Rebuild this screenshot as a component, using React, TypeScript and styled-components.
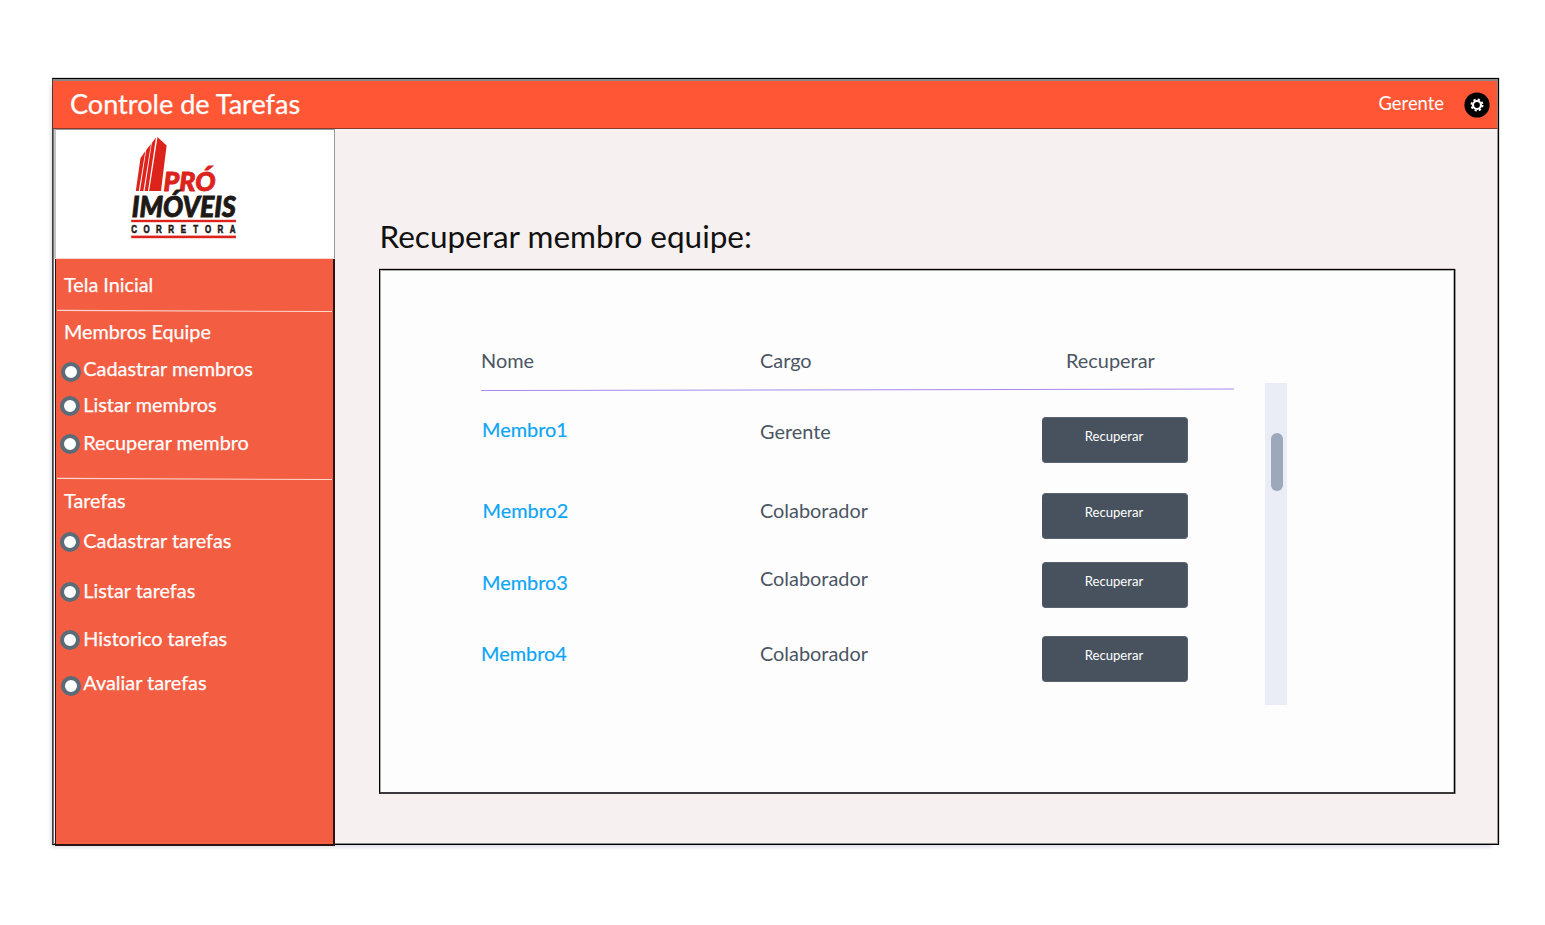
import React from "react";
import styled, { createGlobalStyle } from "styled-components";

const Global = createGlobalStyle`
  * { box-sizing: border-box; }
  body { margin: 0; background: #fff; font-family: Lato, "Liberation Sans", sans-serif; }
  h1, h2, h3, p { margin: 0; font-weight: 400; }
`;

const Page = styled.div`
  width: 1545px;
  height: 925px;
  padding: 78px 46px 80px 52px;
  overflow: hidden;
`;

const Frame = styled.div`
  width: 1447px;
  height: 767px;
  display: flex;
  flex-direction: column;
  border: 1px solid #000;
  border-left-color: #3b3f3f;
  background: #f6f0f0;
  box-shadow: inset 1px 0 0 #777, inset 0 -1px 0 #888, inset -1px 0 0 #999, 0 -1px 0 #dcdfe2, 1px 0 0 #dedede, -4px 5px 4px -3px #d9dae4;
`;

const Header = styled.header`
  flex: none;
  height: 50px;
  display: flex;
  align-items: center;
  padding: 0 7px 0 17px;
  background: #ff5735;
  border-top: 2px solid #8b8682;
  border-bottom: 1px solid #8a3a2a;
  border-right: 1px solid #8b8682;
  color: #fff;
`;

const Title = styled.h1`
  flex: 1;
  font-size: 27.1px;
  line-height: 34px;
  margin-top: -1px;
  -webkit-text-stroke: 0.25px #fff;
`;

const UserName = styled.span`
  font-size: 18.4px;
  line-height: 24px;
  margin: -3px 20px 0 0;
`;

const Body = styled.div`
  flex: 1;
  display: flex;
  min-height: 0;
`;

const Sidebar = styled.aside`
  flex: none;
  width: 282px;
  height: 717px;
  display: flex;
  flex-direction: column;
  padding-left: 1px;
`;

const LogoBox = styled.div`
  flex: none;
  height: 130px;
  background: #fff;
  border: 1px solid #999;
  border-left: 2px solid #c8c4c6;
  border-bottom-color: #f5d8d2;
  padding: 6px 0 0 74px;
`;

const Menu = styled.nav`
  flex: 1;
  margin-left: 1px;
  background: #f35d42;
  border: 1px solid #2b1512;
  border-right-width: 2px;
  border-bottom-width: 2px;
  border-top: 0;
  color: #fff;
  display: flex;
  flex-direction: column;
  -webkit-text-stroke: 0.25px #fff;
`;

const MenuHeading = styled.h3<{ $top: number }>`
  font-size: 19.8px;
  line-height: 24px;
  margin-top: ${(p) => p.$top}px;
  padding-left: 8px;
`;

const MenuItem = styled.div<{ $top: number }>`
  display: flex;
  align-items: flex-start;
  height: 24px;
  font-size: 19.85px;
  line-height: 24px;
  margin-top: ${(p) => p.$top}px;
`;

const Bullet = styled.span<{ $x: number; $y: number }>`
  flex: none;
  width: 20px;
  height: 20px;
  margin: ${(p) => p.$y}px ${(p) => 7.3 - p.$x}px 0 ${(p) => p.$x}px;
  border: 4px solid #5c6b78;
  border-radius: 50%;
  background: #fff;
`;

const Rule = styled.svg<{ $top: number }>`
  display: block;
  flex: none;
  margin-top: ${(p) => p.$top}px;
`;

const Main = styled.main`
  padding: 87px 0 0 44px;
`;

const Heading = styled.h2`
  font-size: 31.5px;
  line-height: 40px;
  color: #111;
  padding-left: 0.5px;
`;

const Panel = styled.section`
  width: 1076px;
  height: 525px;
  margin-top: 13px;
  display: flex;
  border: 1px solid #000;
  border-width: 1px 1px 2px 1px;
  border-bottom-color: #3a3a3c;
  box-shadow: inset 1px 1px 0 #aaa, inset -1px 0 0 #bbb, 0 -1px 0 #ccc6c6, 1px 0 0 #999;
  background: #fdfdfd;
  padding: 78px 0 0 101px;
`;

const Table = styled.div`
  width: 754px;
  color: #4b5563;
  font-size: 19.9px;
  line-height: 24px;
`;

const HeadRow = styled.div`
  display: grid;
  grid-template-columns: 279px 306px 1fr;
  height: 38px;
`;

const Row = styled.div<{ $gap: number }>`
  display: grid;
  grid-template-columns: 279px 282px 146px;
  height: 46px;
  margin-top: ${(p) => p.$gap}px;
`;

const Member = styled.a<{ $dx: number; $dy: number }>`
  color: #0ea5f5;
  padding: ${(p) => p.$dy}px 0 0 ${(p) => p.$dx}px;
  -webkit-text-stroke: 0.2px #0ea5f5;
`;

const Role = styled.span<{ $dy: number }>`
  padding-top: ${(p) => p.$dy}px;
`;

const Action = styled.button`
  height: 46px;
  border: 1px solid #596370;
  border-width: 1px 1px 1px 0;
  border-radius: 4px;
  background: #48525e;
  color: #fff;
  font-family: inherit;
  font-size: 13.1px;
  line-height: 18px;
  padding: 0 1px 8px 0;
`;

const ScrollTrack = styled.div`
  width: 22px;
  height: 322px;
  margin: 35px 0 0 30px;
  padding: 50px 4px 0 6px;
  background: #eaedf6;
`;

const ScrollThumb = styled.div`
  width: 12px;
  height: 58px;
  border-radius: 6px;
  background: #9ea8bb;
`;

const Gear = () => (
  <svg width="26" height="26" viewBox="0 0 26 26">
    <circle cx="13" cy="13" r="12.6" fill="#000" />
    <circle cx="13" cy="13" r="4" fill="none" stroke="#fff" strokeWidth="2.2" />
    <circle cx="13" cy="13" r="5.6" fill="none" stroke="#fff" strokeWidth="1.8" strokeDasharray="2.3 2.1" />
  </svg>
);

const LogoSvg = styled.svg`
  display: block;
  overflow: visible;
`;

const Logo = () => (
  <LogoSvg width="112" height="106" viewBox="0 0 112 106">
    <g fill="#dc241d">
      <path d="M27.5 1 L36.6 9.5 L31 55 L19.2 55 Z" />
      <path d="M26 1.5 L21.8 7 L14.6 55 L18 55 Z" />
      <path d="M21 8 L16.2 14 L10 55 L13.4 55 Z" />
      <path d="M15.4 15 L10.5 22 L5.8 55 L8.8 55 Z" />
      <rect x="1.2" y="83.8" width="104.8" height="2.4" />
      <rect x="1.2" y="99.6" width="104.8" height="2.6" />
    </g>
    <g fontFamily="Lato, Liberation Sans" fontWeight="900" fontStyle="italic">
      <text x="33.5" y="54.8" fontSize="27" fill="#dc241d" stroke="#dc241d" strokeWidth="0.9" textLength="52" lengthAdjust="spacingAndGlyphs">PRÓ</text>
      <text x="1.8" y="80.8" fontSize="29" fill="#1e1916" stroke="#1e1916" strokeWidth="0.9" textLength="104" lengthAdjust="spacingAndGlyphs">IMÓVEIS</text>
    </g>
    <g fontFamily="Liberation Sans" fontWeight="700" fontSize="10.6" fill="#1e1916" stroke="#1e1916" strokeWidth="0.6" textAnchor="middle">
      {"CORRETORA".split("").map((c, i) => (
        <text key={i} transform={`translate(${4.2 + i * 12.3} 96.5) scale(.75 1)`}>{c}</text>
      ))}
    </g>
  </LogoSvg>
);

const teamItems = [
  { label: "Cadastrar membros", top: 13, x: 5, y: 6 },
  { label: "Listar membros", top: 12, x: 4, y: 4 },
  { label: "Recuperar membro", top: 14, x: 4, y: 4 },
];
const taskItems = [
  { label: "Cadastrar tarefas", top: 16, x: 4, y: 4 },
  { label: "Listar tarefas", top: 26, x: 4, y: 4 },
  { label: "Historico tarefas", top: 24, x: 4, y: 4 },
  { label: "Avaliar tarefas", top: 20, x: 5, y: 6 },
];
const members = [
  { name: "Membro1", role: "Gerente", gap: 26, dx: 1, ny: 0, ry: 2 },
  { name: "Membro2", role: "Colaborador", gap: 30, dx: 1.5, ny: 5, ry: 5 },
  { name: "Membro3", role: "Colaborador", gap: 23, dx: 1, ny: 8, ry: 4 },
  { name: "Membro4", role: "Colaborador", gap: 28, dx: 0, ny: 5, ry: 5 },
];

const MenuLine = ({ top }: { top: number }) => (
  <Rule $top={top} width="277" height="3">
    <line x1="1" y1="1.4" x2="276" y2="2.5" stroke="#fcd5cc" strokeWidth="1.1" />
  </Rule>
);

const Items = ({ items }: { items: typeof teamItems }) => (
  <>
    {items.map((it) => (
      <MenuItem key={it.label} $top={it.top}>
        <Bullet $x={it.x} $y={it.y} />
        {it.label}
      </MenuItem>
    ))}
  </>
);

export default function App() {
  return (
    <Page>
      <Global />
      <Frame>
        <Header>
          <Title>Controle de Tarefas</Title>
          <UserName>Gerente</UserName>
          <Gear />
        </Header>
        <Body>
          <Sidebar>
            <LogoBox><Logo /></LogoBox>
            <Menu>
              <MenuHeading $top={13}>Tela Inicial</MenuHeading>
              <MenuLine top={13} />
              <MenuHeading $top={7}>Membros Equipe</MenuHeading>
              <Items items={teamItems} />
              <MenuLine top={23} />
              <MenuHeading $top={8}>Tarefas</MenuHeading>
              <Items items={taskItems} />
            </Menu>
          </Sidebar>
          <Main>
            <Heading>Recuperar membro equipe:</Heading>
            <Panel>
              <Table>
                <HeadRow>
                  <span>Nome</span>
                  <span>Cargo</span>
                  <span>Recuperar</span>
                </HeadRow>
                <Rule $top={2} width="754" height="3">
                  <line x1="0" y1="2.5" x2="753" y2="1" stroke="#a88bf0" strokeWidth="1.1" />
                </Rule>
                {members.map((m) => (
                  <Row key={m.name} $gap={m.gap}>
                    <Member $dx={m.dx} $dy={m.ny}>{m.name}</Member>
                    <Role $dy={m.ry}>{m.role}</Role>
                    <Action>Recuperar</Action>
                  </Row>
                ))}
              </Table>
              <ScrollTrack>
                <ScrollThumb />
              </ScrollTrack>
            </Panel>
          </Main>
        </Body>
      </Frame>
    </Page>
  );
}
